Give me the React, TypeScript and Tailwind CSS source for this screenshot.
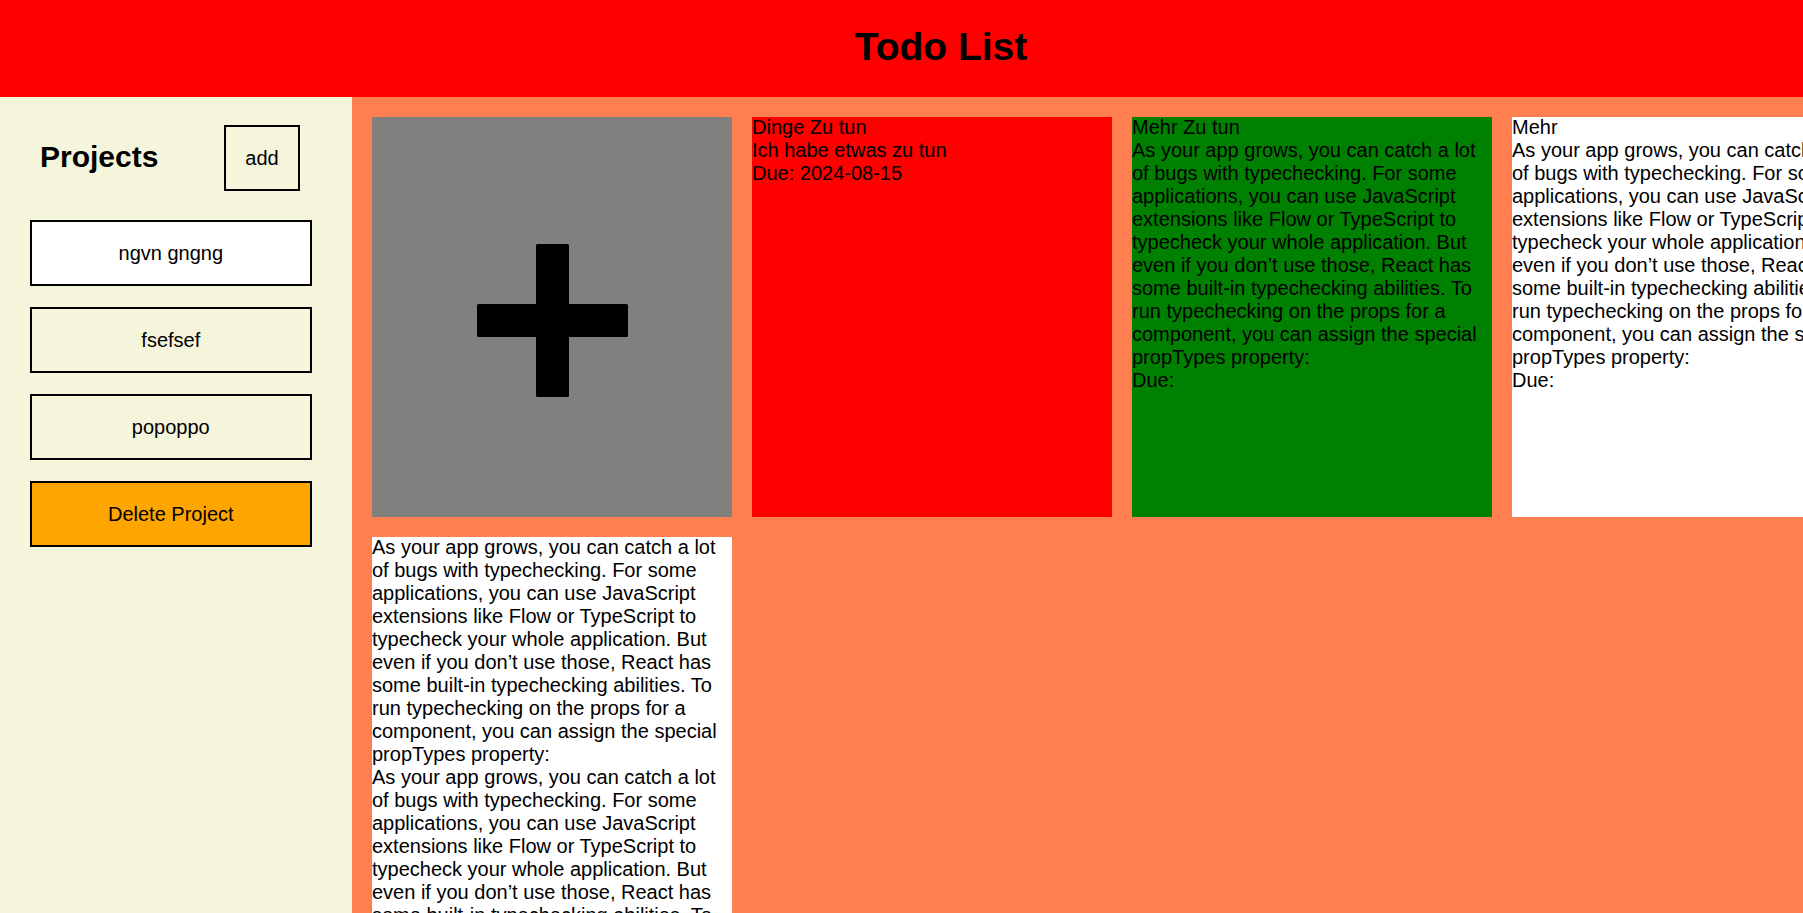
const longText =
  'As your app grows, you can catch a lot of bugs with typechecking. For some applications, you can use JavaScript extensions like Flow or TypeScript to typecheck your whole application. But even if you don’t use those, React has some built-in typechecking abilities. To run typechecking on the props for a component, you can assign the special propTypes property:';

const projects = [
  { id: 1, name: 'ngvn gngng', active: true },
  { id: 2, name: 'fsefsef', active: false },
  { id: 3, name: 'popoppo', active: false },
];

const todos = [
  { id: 1, title: 'Dinge Zu tun', description: 'Ich habe etwas zu tun', due: '2024-08-15', color: 'bg-[#ff0000]' },
  { id: 2, title: 'Mehr Zu tun', description: longText, due: '', color: 'bg-[#008000]' },
  { id: 3, title: 'Mehr', description: longText, due: '', color: 'bg-white' },
  { id: 4, title: longText, description: longText, due: '', color: 'bg-white' },
];

function AddCard() {
  return (
    <div className="h-[400px] bg-[#808080] flex items-center justify-center pt-[7px]">
      <svg width="151" height="153" viewBox="0 0 151 153">
        <rect x="59" y="0" width="33" height="153" rx="1.5" fill="#000" />
        <rect x="0" y="60" width="151" height="33" rx="1.5" fill="#000" />
      </svg>
    </div>
  );
}

export default function App() {
  return (
    <div className="w-screen h-screen overflow-hidden">
      <div className="grid grid-cols-[352px_auto] grid-rows-[97px_auto] w-max min-h-screen font-['Liberation_Sans',Arial,sans-serif] text-black">
        <header className="col-span-2 bg-[#ff0000] flex items-center justify-center pb-[3px]">
          <h1 className="text-[39px] font-bold">Todo List</h1>
        </header>

        <aside className="bg-[#f5f5dc] pt-[28px]">
          <div className="flex items-center">
            <h2 className="ml-[40px] text-[30px] font-bold w-[184px] -mt-[3px]">Projects</h2>
            <button className="w-[76px] h-[66px] border-2 border-black text-[20px]">add</button>
          </div>
          <div className="mt-[29px] ml-[30px] w-[80%] flex flex-col gap-[21px]">
            {projects.map((p) => (
              <button
                key={p.id}
                className={`h-[66px] border-2 border-black text-[20px] ${p.active ? 'bg-white' : ''}`}
              >
                {p.name}
              </button>
            ))}
            <button className="h-[66px] border-2 border-black bg-[#ffa500] text-[20px]">Delete Project</button>
          </div>
        </aside>

        <main className="bg-[#ff7f50] pl-5 pt-5 pr-[10px] pb-5 grid grid-cols-[repeat(4,360px)] gap-5 content-start">
          <AddCard />
          {todos.map((t) => (
            <div key={t.id} className={`min-h-[400px] text-[20px] leading-[23px] ${t.color}`}>
              <div className="-mt-px">{t.title}</div>
              <div>{t.description}</div>
              <div>Due: {t.due}</div>
            </div>
          ))}
        </main>
      </div>
    </div>
  );
}
